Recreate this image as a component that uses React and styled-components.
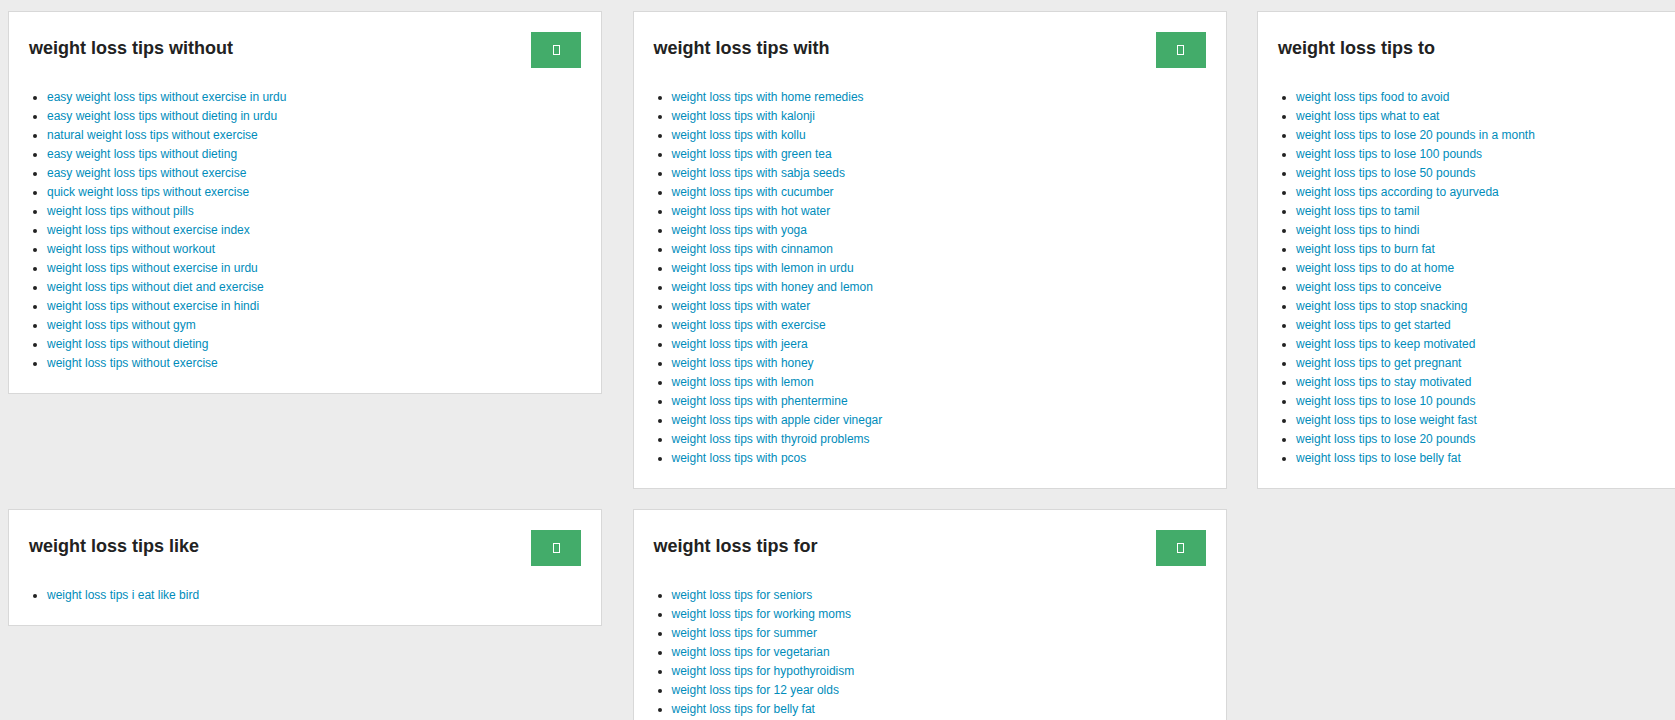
import styled, { createGlobalStyle } from 'styled-components';

const GlobalStyle = createGlobalStyle`
  html, body {
    margin: 0;
    padding: 0;
    background: #ececec;
    overflow-x: hidden;
  }
  body {
    font-family: "Liberation Sans", Arial, Helvetica, sans-serif;
    color: #222;
  }
`;

const groups = [
  {
    title: 'weight loss tips without',
    items: [
      'easy weight loss tips without exercise in urdu',
      'easy weight loss tips without dieting in urdu',
      'natural weight loss tips without exercise',
      'easy weight loss tips without dieting',
      'easy weight loss tips without exercise',
      'quick weight loss tips without exercise',
      'weight loss tips without pills',
      'weight loss tips without exercise index',
      'weight loss tips without workout',
      'weight loss tips without exercise in urdu',
      'weight loss tips without diet and exercise',
      'weight loss tips without exercise in hindi',
      'weight loss tips without gym',
      'weight loss tips without dieting',
      'weight loss tips without exercise',
    ],
  },
  {
    title: 'weight loss tips with',
    items: [
      'home remedies', 'kalonji', 'kollu', 'green tea', 'sabja seeds', 'cucumber',
      'hot water', 'yoga', 'cinnamon', 'lemon in urdu', 'honey and lemon', 'water',
      'exercise', 'jeera', 'honey', 'lemon', 'phentermine', 'apple cider vinegar',
      'thyroid problems', 'pcos',
    ].map(s => `weight loss tips with ${s}`),
  },
  {
    title: 'weight loss tips to',
    items: [
      'weight loss tips food to avoid',
      'weight loss tips what to eat',
      'weight loss tips to lose 20 pounds in a month',
      'weight loss tips to lose 100 pounds',
      'weight loss tips to lose 50 pounds',
      'weight loss tips according to ayurveda',
      'weight loss tips to tamil',
      'weight loss tips to hindi',
      'weight loss tips to burn fat',
      'weight loss tips to do at home',
      'weight loss tips to conceive',
      'weight loss tips to stop snacking',
      'weight loss tips to get started',
      'weight loss tips to keep motivated',
      'weight loss tips to get pregnant',
      'weight loss tips to stay motivated',
      'weight loss tips to lose 10 pounds',
      'weight loss tips to lose weight fast',
      'weight loss tips to lose 20 pounds',
      'weight loss tips to lose belly fat',
    ],
  },
  {
    title: 'weight loss tips like',
    items: ['weight loss tips i eat like bird'],
  },
  {
    title: 'weight loss tips for',
    items: [
      'seniors', 'working moms', 'summer', 'vegetarian', 'hypothyroidism',
      '12 year olds', 'belly fat',
    ].map(s => `weight loss tips for ${s}`),
  },
];

const Page = styled.div`
  padding: 11px 0 0 8px;
  display: grid;
  grid-template-columns: repeat(3, 594px);
  column-gap: 30.5px;
  row-gap: 20px;
  align-items: start;
  width: max-content;
`;

const Card = styled.section`
  background: #fff;
  border: 1px solid #d8d8d8;
  padding: 20px;
`;

const CardHeader = styled.div`
  display: flex;
  justify-content: space-between;
  align-items: flex-start;
  margin-bottom: 20px;
`;

const Title = styled.h3`
  margin: 7px 0 0;
  font-size: 18px;
  line-height: 19.8px;
  font-weight: bold;
  color: #222;
`;

const CopyButton = styled.button`
  width: 50px;
  height: 36px;
  border: none;
  padding: 0;
  background: #43ac6a;
  display: flex;
  align-items: center;
  justify-content: center;
  cursor: pointer;
`;

const Glyph = styled.span`
  display: block;
  width: 5px;
  height: 8px;
  border: 1px solid #fff;
`;

const List = styled.ul`
  margin: 0;
  padding-left: 18px;
  font-size: 12px;
  line-height: 19px;
  color: #222;
`;

const Link = styled.a`
  color: #008cba;
  text-decoration: none;
`;

const App = () => (
  <>
    <GlobalStyle />
    <Page>
      {groups.map(group => (
        <Card key={group.title}>
          <CardHeader>
            <Title>{group.title}</Title>
            <CopyButton type="button" aria-label="copy">
              <Glyph />
            </CopyButton>
          </CardHeader>
          <List>
            {group.items.map(item => (
              <li key={item}>
                <Link href="#">{item}</Link>
              </li>
            ))}
          </List>
        </Card>
      ))}
    </Page>
  </>
);

export default App;
